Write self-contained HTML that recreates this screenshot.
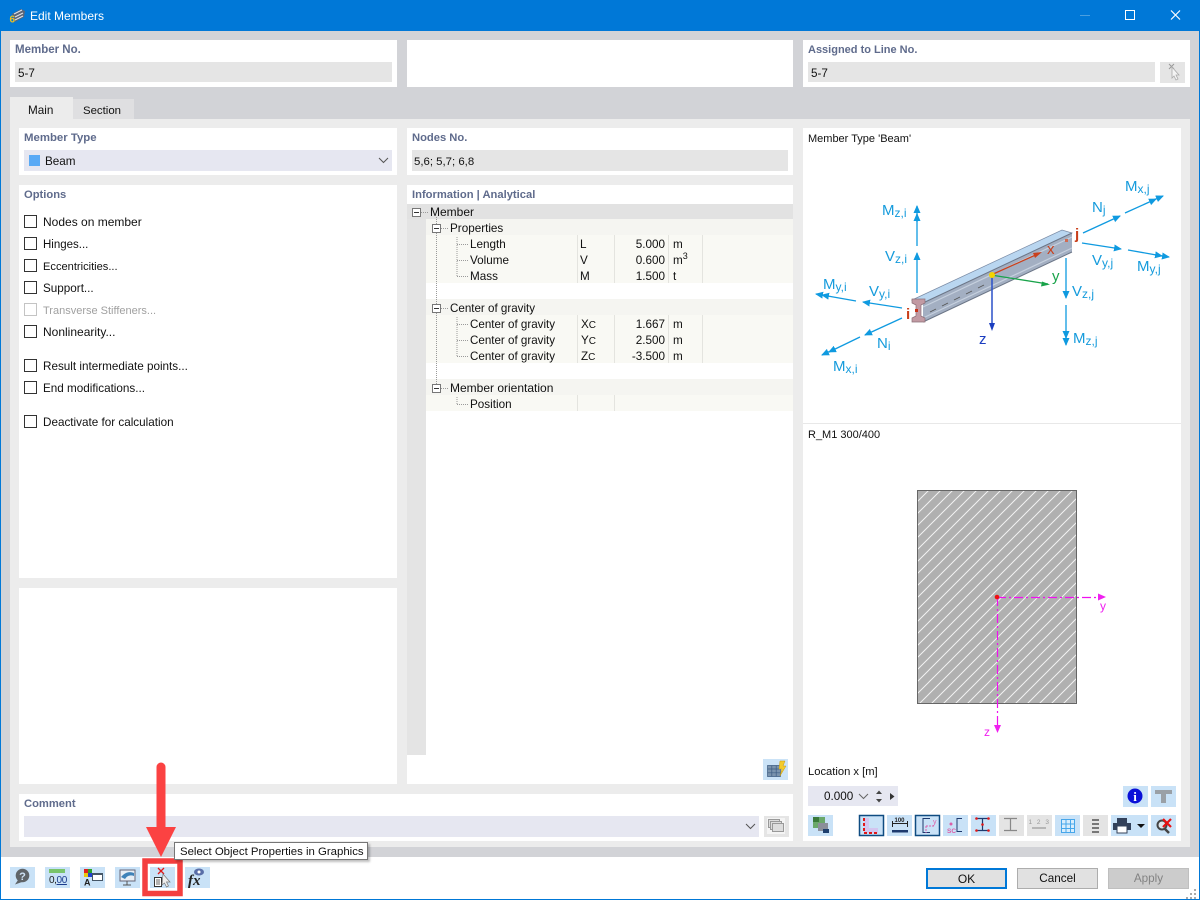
<!DOCTYPE html>
<html><head><meta charset="utf-8"><title>Edit Members</title>
<style>
html,body{margin:0;padding:0;width:1200px;height:900px;overflow:hidden;background:#d2d3d7}
body{position:relative;font:11.7px/16px "Liberation Sans",sans-serif;color:#111}
.b{position:absolute}
.p{position:absolute;background:#fff}
.t{position:absolute;white-space:nowrap;line-height:18px;height:18px}
.x{font-size:12px;line-height:16px;height:16px}
.h{font-weight:bold;color:#5f6b8c;font-size:11.2px}
.i{position:absolute;height:21px;line-height:24px;padding-left:6px;box-sizing:border-box;white-space:nowrap}
.g{background:#e5e5e5}.l{background:#e6e7f1}
.c{position:absolute;left:24px;width:11px;height:11px;border:1px solid #333;background:#fff}
.r{position:absolute;left:426px;width:367px;height:16px}
.v{position:absolute;width:1px;background:#e4e4df}
.btn{position:absolute;top:868px;width:81px;height:21px;box-sizing:border-box;text-align:center;line-height:19px}
svg{position:absolute;left:0;top:0}
sup{font-size:9px;line-height:0}
</style></head><body>

<div class="b" style="left:0;top:0;width:1200px;height:31px;background:#0078d7"></div>
<div class="b" style="left:0;top:31px;width:1px;height:869px;background:#0078d7"></div>
<div class="b" style="left:1199px;top:31px;width:1px;height:869px;background:#0078d7"></div>
<div class="t x" style="left:30px;top:8px;color:#fff">Edit Members</div>

<div class="p" style="left:10px;top:40px;width:387px;height:47px"></div>
<div class="p" style="left:407px;top:40px;width:386px;height:47px"></div>
<div class="p" style="left:803px;top:40px;width:387px;height:47px"></div>
<div class="t h" style="left:15px;top:41px;font-size:11.5px">Member No.</div>
<div class="i g" style="left:15px;top:62px;width:377px;height:20px;padding-left:3px">5-7</div>
<div class="t h" style="left:808px;top:41px;font-size:11px">Assigned to Line No.</div>
<div class="i g" style="left:808px;top:62px;width:347px;height:20px;padding-left:3px">5-7</div>
<div class="b g" style="left:1160px;top:62px;width:25px;height:21px"></div>

<div class="b" style="left:10px;top:119px;width:1180px;height:728px;background:#ececec"></div>
<div class="b" style="left:10px;top:97px;width:63px;height:22px;background:#ececec"></div>
<div class="b" style="left:73px;top:99px;width:61px;height:20px;background:#dfdfe1"></div>
<div class="t" style="left:28px;top:102px">Main</div>
<div class="t" style="left:83px;top:102px;font-size:11.4px">Section</div>

<div class="p" style="left:19px;top:128px;width:378px;height:47px"></div>
<div class="t h" style="left:24px;top:129px;font-size:11.4px">Member Type</div>
<div class="i l" style="left:24px;top:150px;width:368px;padding-left:21px">Beam</div>
<div class="b" style="left:29px;top:155px;width:11px;height:11px;background:#5aaaf5"></div>

<div class="p" style="left:19px;top:185px;width:378px;height:393px"></div>
<div class="t h" style="left:24px;top:186px">Options</div>
<div class="c" style="top:215px"></div><div class="t x" style="left:43px;top:214px">Nodes on member</div>
<div class="c" style="top:237px"></div><div class="t" style="left:43px;top:236px;font-size:11.5px">Hinges...</div>
<div class="c" style="top:259px"></div><div class="t" style="left:43px;top:258px;font-size:11.1px">Eccentricities...</div>
<div class="c" style="top:281px"></div><div class="t" style="left:43px;top:280px">Support...</div>
<div class="c" style="top:303px;border-color:#c4c4c4"></div><div class="t" style="left:43px;top:302px;color:#a0a0a0;font-size:11px">Transverse Stiffeners...</div>
<div class="c" style="top:325px"></div><div class="t x" style="left:43px;top:324px">Nonlinearity...</div>
<div class="c" style="top:359px"></div><div class="t" style="left:43px;top:358px">Result intermediate points...</div>
<div class="c" style="top:381px"></div><div class="t" style="left:43px;top:380px">End modifications...</div>
<div class="c" style="top:415px"></div><div class="t" style="left:43px;top:414px">Deactivate for calculation</div>

<div class="p" style="left:19px;top:588px;width:378px;height:196px"></div>

<div class="p" style="left:19px;top:794px;width:774px;height:47px"></div>
<div class="t h" style="left:24px;top:795px">Comment</div>
<div class="i l" style="left:24px;top:816px;width:735px"></div>
<div class="b g" style="left:764px;top:816px;width:25px;height:21px"></div>

<div class="p" style="left:407px;top:128px;width:386px;height:47px"></div>
<div class="t h" style="left:412px;top:129px">Nodes No.</div>
<div class="i g" style="left:412px;top:150px;width:376px;padding-left:2px;font-size:11.4px">5,6; 5,7; 6,8</div>

<div class="p" style="left:407px;top:185px;width:386px;height:599px"></div>
<div class="t h" style="left:412px;top:186px">Information | Analytical</div>
<div class="b" style="left:407px;top:204px;width:19px;height:551px;background:#e4e4e4"></div>
<div class="b" style="left:407px;top:204px;width:386px;height:15px;background:#e2e2e2"></div>
<div class="r" style="top:219px;background:#f5f5f1"></div>
<div class="r" style="top:235px;height:48px;background:#f9f9f4"></div>
<div class="r" style="top:299px;background:#f5f5f1"></div>
<div class="r" style="top:315px;height:48px;background:#f9f9f4"></div>
<div class="r" style="top:379px;background:#f5f5f1"></div>
<div class="r" style="top:395px;background:#f9f9f4"></div>
<div class="v" style="left:577px;top:235px;height:48px"></div><div class="v" style="left:614px;top:235px;height:48px"></div><div class="v" style="left:668px;top:235px;height:48px"></div><div class="v" style="left:702px;top:235px;height:48px"></div>
<div class="v" style="left:577px;top:315px;height:48px"></div><div class="v" style="left:614px;top:315px;height:48px"></div><div class="v" style="left:668px;top:315px;height:48px"></div><div class="v" style="left:702px;top:315px;height:48px"></div>
<div class="v" style="left:577px;top:395px;height:16px"></div><div class="v" style="left:614px;top:395px;height:16px"></div>

<div class="t x" style="left:430px;top:204px">Member</div>
<div class="t" style="left:450px;top:220px">Properties</div>
<div class="t" style="left:470px;top:236px">Length</div><div class="t" style="left:580px;top:236px">L</div><div class="t" style="left:600px;top:236px;width:65px;text-align:right">5.000</div><div class="t" style="left:673px;top:236px">m</div>
<div class="t" style="left:470px;top:252px">Volume</div><div class="t" style="left:580px;top:252px">V</div><div class="t" style="left:600px;top:252px;width:65px;text-align:right">0.600</div><div class="t" style="left:673px;top:252px">m<sup>3</sup></div>
<div class="t" style="left:470px;top:268px">Mass</div><div class="t" style="left:580px;top:268px">M</div><div class="t" style="left:600px;top:268px;width:65px;text-align:right">1.500</div><div class="t" style="left:673px;top:268px">t</div>
<div class="t" style="left:450px;top:300px;font-size:11.6px">Center of gravity</div>
<div class="t" style="left:470px;top:316px;font-size:11.6px">Center of gravity</div><div class="t" style="left:581px;top:316px">X<span style="font-size:10px">C</span></div><div class="t" style="left:600px;top:316px;width:65px;text-align:right">1.667</div><div class="t" style="left:673px;top:316px">m</div>
<div class="t" style="left:470px;top:332px;font-size:11.6px">Center of gravity</div><div class="t" style="left:581px;top:332px">Y<span style="font-size:10px">C</span></div><div class="t" style="left:600px;top:332px;width:65px;text-align:right">2.500</div><div class="t" style="left:673px;top:332px">m</div>
<div class="t" style="left:470px;top:348px;font-size:11.6px">Center of gravity</div><div class="t" style="left:581px;top:348px">Z<span style="font-size:10px">C</span></div><div class="t" style="left:600px;top:348px;width:65px;text-align:right">-3.500</div><div class="t" style="left:673px;top:348px">m</div>
<div class="t x" style="left:450px;top:380px">Member orientation</div>
<div class="t" style="left:470px;top:396px">Position</div>

<div class="p" style="left:803px;top:128px;width:378px;height:713px"></div>
<div class="b" style="left:803px;top:423px;width:378px;height:1px;background:#e8e8e8"></div>
<div class="t" style="left:808px;top:130px;font-size:11px">Member Type 'Beam'</div>
<div class="t" style="left:808px;top:426px;font-size:11px">R_M1 300/400</div>
<div class="t" style="left:808px;top:763px;font-size:11.2px">Location x [m]</div>
<div class="b l" style="left:808px;top:786px;width:90px;height:20px"></div>
<div class="t" style="left:824px;top:788px">0.000</div>

<svg width="1200" height="900" viewBox="0 0 1200 900">
<defs>
<pattern id="hatch" patternUnits="userSpaceOnUse" width="12" height="12" patternTransform="translate(917 490)">
<rect width="12" height="12" fill="#b0b0b0"/>
<path d="M-3 3L3 -3M-3 15L15 -3M9 15L15 9" stroke="#f2f2f2" stroke-width="1"/>
</pattern>
<marker id="a" markerWidth="8" markerHeight="8" refX="7" refY="3.5" orient="auto" markerUnits="userSpaceOnUse"><path d="M0 0L8 3.500L0 7Z" fill="#0f9ae0"/></marker>
</defs>

<!-- window controls -->
<path d="M1080 15.500h10" stroke="#4a9fe0" stroke-width="1"/>
<rect x="1125.500" y="10.500" width="9" height="9" fill="none" stroke="#fff"/>
<path d="M1171 10.500l9 9M1180 10.500l-9 9" stroke="#fff" stroke-width="1.200"/>
<!-- app icon -->
<g>
<path d="M12 14l9-5 4 2-1 6-9 5z" fill="#5c6678"/><path d="M14 14l8-4M15 17l8-4M15 20l8-4" stroke="#dfe4ec" stroke-width="1"/>
<text x="9.500" y="22.500" font-family="Liberation Sans" font-weight="bold" font-size="10" fill="#efc21e">6</text>
</g>
<!-- disabled pick -->
<path d="M1169 64l5 5M1174 64l-5 5" stroke="#999" stroke-width="1"/>
<path d="M1172 67l7 8-3 0 2 4-2 1-2-4-2 2z" fill="#f4f4f4" stroke="#aaa" stroke-width=".8"/>

<!-- combobox chevrons -->
<path d="M379 158l4.500 4.500 4.500-4.500" fill="none" stroke="#555" stroke-width="1"/>
<path d="M746 824l4.500 4.500 4.500-4.500" fill="none" stroke="#555" stroke-width="1"/>
<path d="M859 794l4.500 4.500 4.500-4.500" fill="none" stroke="#666" stroke-width="1"/>
<path d="M876 794l3-3.500 3 3.500zM876 799l3 3.500 3-3.500z" fill="#444"/>
<path d="M890 793v7l4.500-3.500z" fill="#333"/>
<!-- comment side icon -->
<rect x="767" y="818" width="18" height="16" fill="#f4f4f4"/>
<g fill="#ddd" stroke="#999"><rect x="768.500" y="819.500" width="11" height="8"/><rect x="770.500" y="821.500" width="11" height="8"/><rect x="772.500" y="823.500" width="11" height="8"/></g>

<!-- tree lines -->
<g stroke="#9a9a9a" stroke-width="1" stroke-dasharray="1 1" fill="none">
<path d="M421 212.500h8M436.500 217v168M441 228.500h8M441 308.500h8M441 388.500h8"/>
<path d="M457 237v39M457 244.500h11M457 260.500h11M457 276.500h11M457 317v39M457 324.500h11M457 340.500h11M457 356.500h11M457 397v8M457 404.500h11"/>
</g>
<g fill="#fff" stroke="#777"><rect x="412.500" y="208.500" width="8" height="8"/><rect x="432.500" y="224.500" width="8" height="8"/><rect x="432.500" y="304.500" width="8" height="8"/><rect x="432.500" y="384.500" width="8" height="8"/></g>
<path d="M414 212.500h5M434 228.500h5M434 308.500h5M434 388.500h5" stroke="#333"/>

<!-- grid lightning -->
<rect x="763" y="759" width="25" height="21" fill="#cbe3f7"/>
<g fill="#7a93ad" stroke="#3c5c82" stroke-width=".7"><path d="M767.500 765.500h13v11h-13zM767.500 769h13M767.500 772.800h13M771.800 765.500v11M776.200 765.500v11"/></g>
<path d="M780 761h5l-2 5h3l-6 10 2-7h-3z" fill="#f3cb2c" stroke="#c99a10" stroke-width=".5"/>

<!-- Beam diagram -->
<path d="M912 300L1062 230L1072 233L923 303Z" fill="#b9d6f0" stroke="#7a8ba5" stroke-width=".7"/>
<path d="M923 303L1072 233V252L923 322Z" fill="#a3afc2"/>
<path d="M923 307L1072 237M923 318L1072 248" stroke="#c6d0de" stroke-width="1.200"/>
<path d="M923 303L1072 233M923 322L1072 252" stroke="#6c7687" stroke-width="1"/>
<path d="M930 312l6-3M942 306l6-3M954 300l6-3M966 294l6-3M978 288l6-3" stroke="#555" stroke-width=".8"/>
<path d="M912 299h13v4l-4 2v11l4 2v4h-13v-4l4-2v-11l-4-2z" fill="#c29aa3" stroke="#8b6f78" stroke-width=".7"/>
<rect x="915" y="309" width="3" height="3" fill="#c9341a"/>
<rect x="1065" y="239" width="3" height="3" fill="#d26a50"/>
<path d="M991 275L1040 253" stroke="#c9401c" stroke-width="1.300"/><path d="M1042 252l-7 6-2-5z" fill="#c9401c"/>
<path d="M991 275L1048 284" stroke="#19a34a" stroke-width="1.300"/><path d="M1050 284.500l-9 2 1-5z" fill="#19a34a"/>
<path d="M992 275V326" stroke="#2a50c8" stroke-width="1.500"/><path d="M992 331l-3-8h6z" fill="#1c3ec0"/>
<circle cx="992" cy="275" r="3" fill="#f4d400"/>

<g stroke="#0f9ae0" stroke-width="1.300" fill="none">
<path d="M917 246V206" marker-end="url(#a)"/><path d="M917 222v-8" marker-end="url(#a)"/>
<path d="M917 293V253" marker-end="url(#a)"/>
<path d="M1125 213L1156 199" marker-end="url(#a)"/><path d="M1150 201.500L1163 196" marker-end="url(#a)"/>
<path d="M1083 233L1120 216" marker-end="url(#a)"/>
<path d="M1082 243L1121 249" marker-end="url(#a)"/>
<path d="M1128 250L1162 256" marker-end="url(#a)"/><path d="M1155 255L1169 257" marker-end="url(#a)"/>
<path d="M1066 258V298" marker-end="url(#a)"/>
<path d="M1066 305V338" marker-end="url(#a)"/><path d="M1066 335V345" marker-end="url(#a)"/>
<path d="M902 308L863 302" marker-end="url(#a)"/>
<path d="M856 301L822 295" marker-end="url(#a)"/><path d="M828 296L816 294" marker-end="url(#a)"/>
<path d="M902 318L865 335" marker-end="url(#a)"/>
<path d="M860 337L829 352" marker-end="url(#a)"/><path d="M835 349L822 355" marker-end="url(#a)"/>
</g>
<g font-family="Liberation Sans" font-size="15" fill="#159bdc">
<text x="882" y="215">M<tspan font-size="12" dy="2">z,i</tspan></text>
<text x="885" y="261">V<tspan font-size="12" dy="2">z,i</tspan></text>
<text x="823" y="289">M<tspan font-size="12" dy="2">y,i</tspan></text>
<text x="869" y="296">V<tspan font-size="12" dy="2">y,i</tspan></text>
<text x="877" y="348">N<tspan font-size="12" dy="2">i</tspan></text>
<text x="833" y="371">M<tspan font-size="12" dy="2">x,i</tspan></text>
<text x="1125" y="191">M<tspan font-size="12" dy="2">x,j</tspan></text>
<text x="1092" y="212">N<tspan font-size="12" dy="2">j</tspan></text>
<text x="1092" y="265">V<tspan font-size="12" dy="2">y,j</tspan></text>
<text x="1137" y="271">M<tspan font-size="12" dy="2">y,j</tspan></text>
<text x="1072" y="296">V<tspan font-size="12" dy="2">z,j</tspan></text>
<text x="1073" y="343">M<tspan font-size="12" dy="2">z,j</tspan></text>
</g>
<g font-family="Liberation Sans" font-size="15">
<text x="906" y="319" fill="#c9401c" font-weight="bold">i</text>
<text x="1075" y="239" fill="#c9401c" font-weight="bold">j</text>
<text x="1047" y="254" fill="#c9401c">x</text>
<text x="1052" y="281" fill="#19a34a">y</text>
<text x="979" y="344" fill="#1c3ec0">z</text>
</g>

<!-- Section -->
<rect x="917.500" y="490.500" width="159" height="213" fill="url(#hatch)" stroke="#666" stroke-width="1"/>
<path d="M997 597.500H1098M997.500 597V726" stroke="#f010f0" stroke-width="1.200" stroke-dasharray="9 3 2 3" fill="none"/>
<path d="M1106 597l-8-3.500v7zM997.500 733l-3.500-8h7z" fill="#f020f0"/>
<circle cx="997" cy="597" r="2.300" fill="#f01010"/>
<text x="1100" y="610" font-family="Liberation Sans" font-size="12" fill="#f020f0">y</text>
<text x="984" y="736" font-family="Liberation Sans" font-size="12" fill="#f020f0">z</text>

<!-- Right side toolbar -->
<g fill="#c9e2f7">
<rect x="1123" y="786" width="25" height="21"/><rect x="1151" y="786" width="25" height="21"/>
<rect x="808" y="815" width="25" height="21"/>
<rect x="859.500" y="815.500" width="24" height="20" stroke="#0f4c81" stroke-width="1.500"/>
<rect x="887" y="815" width="25" height="21"/>
<rect x="915.500" y="815.500" width="24" height="20" stroke="#0f4c81" stroke-width="1.500"/>
<rect x="943" y="815" width="25" height="21"/><rect x="971" y="815" width="25" height="21"/>
<rect x="999" y="815" width="25" height="21" fill="#e4e4e4"/><rect x="1027" y="815" width="25" height="21" fill="#e4e4e4"/>
<rect x="1055" y="815" width="25" height="21"/>
<rect x="1083" y="815" width="25" height="21" fill="#e4e4e4"/>
<rect x="1111" y="815" width="37" height="21"/><rect x="1151" y="815" width="25" height="21"/>
</g>
<circle cx="1135" cy="796" r="7.500" fill="#0a10d8"/>
<text x="1135" y="801" text-anchor="middle" font-family="Liberation Serif" font-weight="bold" font-size="13" fill="#fff">i</text>
<path d="M1155 790h17v4h-6v9h-5v-9h-6z" fill="#9aa0a6"/>
<!-- 808 icon -->
<rect x="813" y="817" width="12" height="11" fill="#6aa86a"/><rect x="813" y="817" width="6" height="5" fill="#3a7a3a"/><rect x="818" y="823" width="10" height="8" fill="#8b8f9a"/>
<path d="M823 829h6v4h-6z" fill="#1e3f6e"/>
<!-- L section -->
<path d="M864 818v15h14v-5h-9v-10z" fill="#d3c5ef"/>
<path d="M864 818v15h14" fill="none" stroke="#e01818" stroke-width="2" stroke-dasharray="3 2"/>
<!-- dim 100 -->
<text x="899.500" y="822" text-anchor="middle" font-family="Liberation Sans" font-weight="bold" font-size="6" fill="#222">100</text>
<path d="M892 823.500h16M892.500 821v6M907.500 821v6" stroke="#222" fill="none"/>
<rect x="892" y="830" width="16" height="2.500" fill="#1e3a6e"/>
<!-- axes -->
<path d="M930 818.500h-7v14h7" fill="none" stroke="#1e3a6e" stroke-width="1"/>
<path d="M926 826h8M926 826v7" stroke="#dc5ea8" stroke-width="1" stroke-dasharray="2 1"/>
<text x="933" y="824" font-family="Liberation Sans" font-size="7" fill="#dc5ea8">y</text>
<!-- SC -->
<path d="M962 818.500h-5v13h5" fill="none" stroke="#1e3a6e"/>
<circle cx="951" cy="824" r="1.500" fill="#dc5ea8"/>
<text x="947" y="833" font-family="Liberation Sans" font-weight="bold" font-size="6.500" fill="#dc5ea8">SC</text>
<!-- I red -->
<path d="M976 818.500h13M976 830.500h13M982.500 818v13" stroke="#1e3a6e" stroke-width="1.200"/>
<g fill="#e01818"><circle cx="976.500" cy="818.500" r="1.300"/><circle cx="988.500" cy="818.500" r="1.300"/><circle cx="976.500" cy="830.500" r="1.300"/><circle cx="988.500" cy="830.500" r="1.300"/><circle cx="982.500" cy="824.500" r="1.300"/></g>
<!-- I grey -->
<path d="M1004 818.500h13M1004 830.500h13M1010.500 818v13" stroke="#888" stroke-width="1.200"/>
<!-- 123 -->
<text x="1039.500" y="824" text-anchor="middle" font-family="Liberation Sans" font-size="6.500" fill="#999" letter-spacing="1.500">1 2 3</text>
<path d="M1032 828h14" stroke="#888"/>
<!-- grid -->
<path d="M1061.500 819.500h13v13h-13zM1061.500 824h13M1061.500 828.500h13M1066 819.500v13M1070.500 819.500v13" fill="#d8edfc" stroke="#46a6ea"/>
<!-- dotted table -->
<g fill="#777"><rect x="1092" y="819" width="7" height="2"/><rect x="1092" y="823" width="7" height="2"/><rect x="1092" y="827" width="7" height="2"/><rect x="1092" y="831" width="7" height="2"/></g>
<!-- printer -->
<path d="M1117 818h10v5h-10zM1113 823h18v7h-18z" fill="#33415a"/><rect x="1117" y="826" width="10" height="7" fill="#fff" stroke="#33415a"/>
<path d="M1137 824h8l-4 4z" fill="#111"/>
<!-- magnifier red x -->
<circle cx="1162" cy="825" r="4.500" fill="#dde4ea" stroke="#444" stroke-width="2"/><path d="M1165 829l4 4" stroke="#444" stroke-width="2.500"/>
<path d="M1163 819l8 8M1171 819l-8 8" stroke="#e81010" stroke-width="2.200"/>

<!-- footer -->
<rect x="1" y="857" width="1198" height="42" fill="#fff"/>
<rect x="0" y="899" width="1200" height="1" fill="#0078d7"/>
<g fill="#c9e2f7">
<rect x="10" y="867" width="25" height="21"/><rect x="45" y="867" width="25" height="21"/><rect x="80" y="867" width="25" height="21"/><rect x="115" y="867" width="25" height="21"/><rect x="150" y="867" width="25" height="21"/><rect x="185" y="867" width="25" height="21"/>
</g>
<circle cx="22.500" cy="875.500" r="6.800" fill="#5f6468"/>
<path d="M18 880l-3 4.500 7-2.500z" fill="#5f6468"/>
<text x="22.500" y="880" text-anchor="middle" font-family="Liberation Sans" font-weight="bold" font-size="11" fill="#cfe3f6">?</text>
<rect x="49" y="869" width="16" height="4" fill="#79c46c"/>
<text x="49" y="883" font-family="Liberation Sans" font-size="10" letter-spacing="-.4" fill="#222">0,<tspan fill="#1a3a8c" text-decoration="underline">00</tspan></text>
<rect x="84" y="869" width="4" height="4" fill="#e02020"/><rect x="88" y="869" width="4" height="4" fill="#2aa12a"/><rect x="84" y="873" width="4" height="4" fill="#e8c810"/><rect x="88" y="873" width="4" height="4" fill="#2040d0"/>
<text x="84" y="885.500" font-family="Liberation Sans" font-weight="bold" font-size="9" fill="#222">A</text>
<rect x="92.500" y="873.500" width="10" height="7" fill="#fff" stroke="#456"/><rect x="92" y="873" width="11" height="2" fill="#456"/>
<rect x="120" y="870" width="15" height="11" fill="#e8eef5" stroke="#667"/><path d="M121 877q6-7 13-4v3q-6-2-9 3z" fill="#3f82b8"/><path d="M127 881v4M123 885h8" stroke="#555"/>
<!-- pick icon -->
<path d="M158 868l6 6M164 868l-6 6" stroke="#e01818" stroke-width="1.300"/>
<rect x="154.500" y="877.500" width="7" height="9" fill="#fff" stroke="#333"/><path d="M156 880h4M156 882h4M156 884h4" stroke="#333" stroke-width=".8"/>
<path d="M163 874l7 8-3.500 0 2 4-2 1-2-4-2.500 2z" fill="#eeeeee" stroke="#777" stroke-width=".7"/>
<!-- f(x) eye -->
<text x="188" y="885" font-family="Liberation Serif" font-style="italic" font-weight="bold" font-size="15" fill="#222">fx</text>
<ellipse cx="199" cy="872" rx="5" ry="3.500" fill="#5a6fa8"/><circle cx="199" cy="872" r="1.500" fill="#fff"/>

<!-- resize grip -->
<g fill="#aaa"><rect x="1194" y="889" width="2" height="2"/><rect x="1190" y="893" width="2" height="2"/><rect x="1194" y="893" width="2" height="2"/><rect x="1186" y="897" width="2" height="2"/><rect x="1190" y="897" width="2" height="2"/><rect x="1194" y="897" width="2" height="2"/></g>

<!-- red annotations -->
<rect x="145" y="861" width="35" height="32.500" fill="none" stroke="#f43f3f" stroke-width="5.500"/>
<path d="M161 767V830" stroke="#fb4242" stroke-width="9" stroke-linecap="round"/>
<path d="M146 827H176L161 857Z" fill="#fb4242"/>
</svg>

<div class="btn" style="left:926px;border:2px solid #0078d7;background:#e1e1e1;line-height:18px;font-size:12px">OK</div>
<div class="btn" style="left:1017px;border:1px solid #adadad;background:#e1e1e1;line-height:20px">Cancel</div>
<div class="btn" style="left:1108px;border:1px solid #bfbfbf;background:#cccccc;color:#838383;line-height:20px">Apply</div>

<div class="b" style="left:174px;top:842px;width:187px;height:16px;background:#fff;border:1px solid #767676;box-shadow:2px 2px 2px rgba(0,0,0,.25);line-height:19px;padding-left:5px;white-space:nowrap;font-size:11.4px">Select Object Properties in Graphics</div>
</body></html>
